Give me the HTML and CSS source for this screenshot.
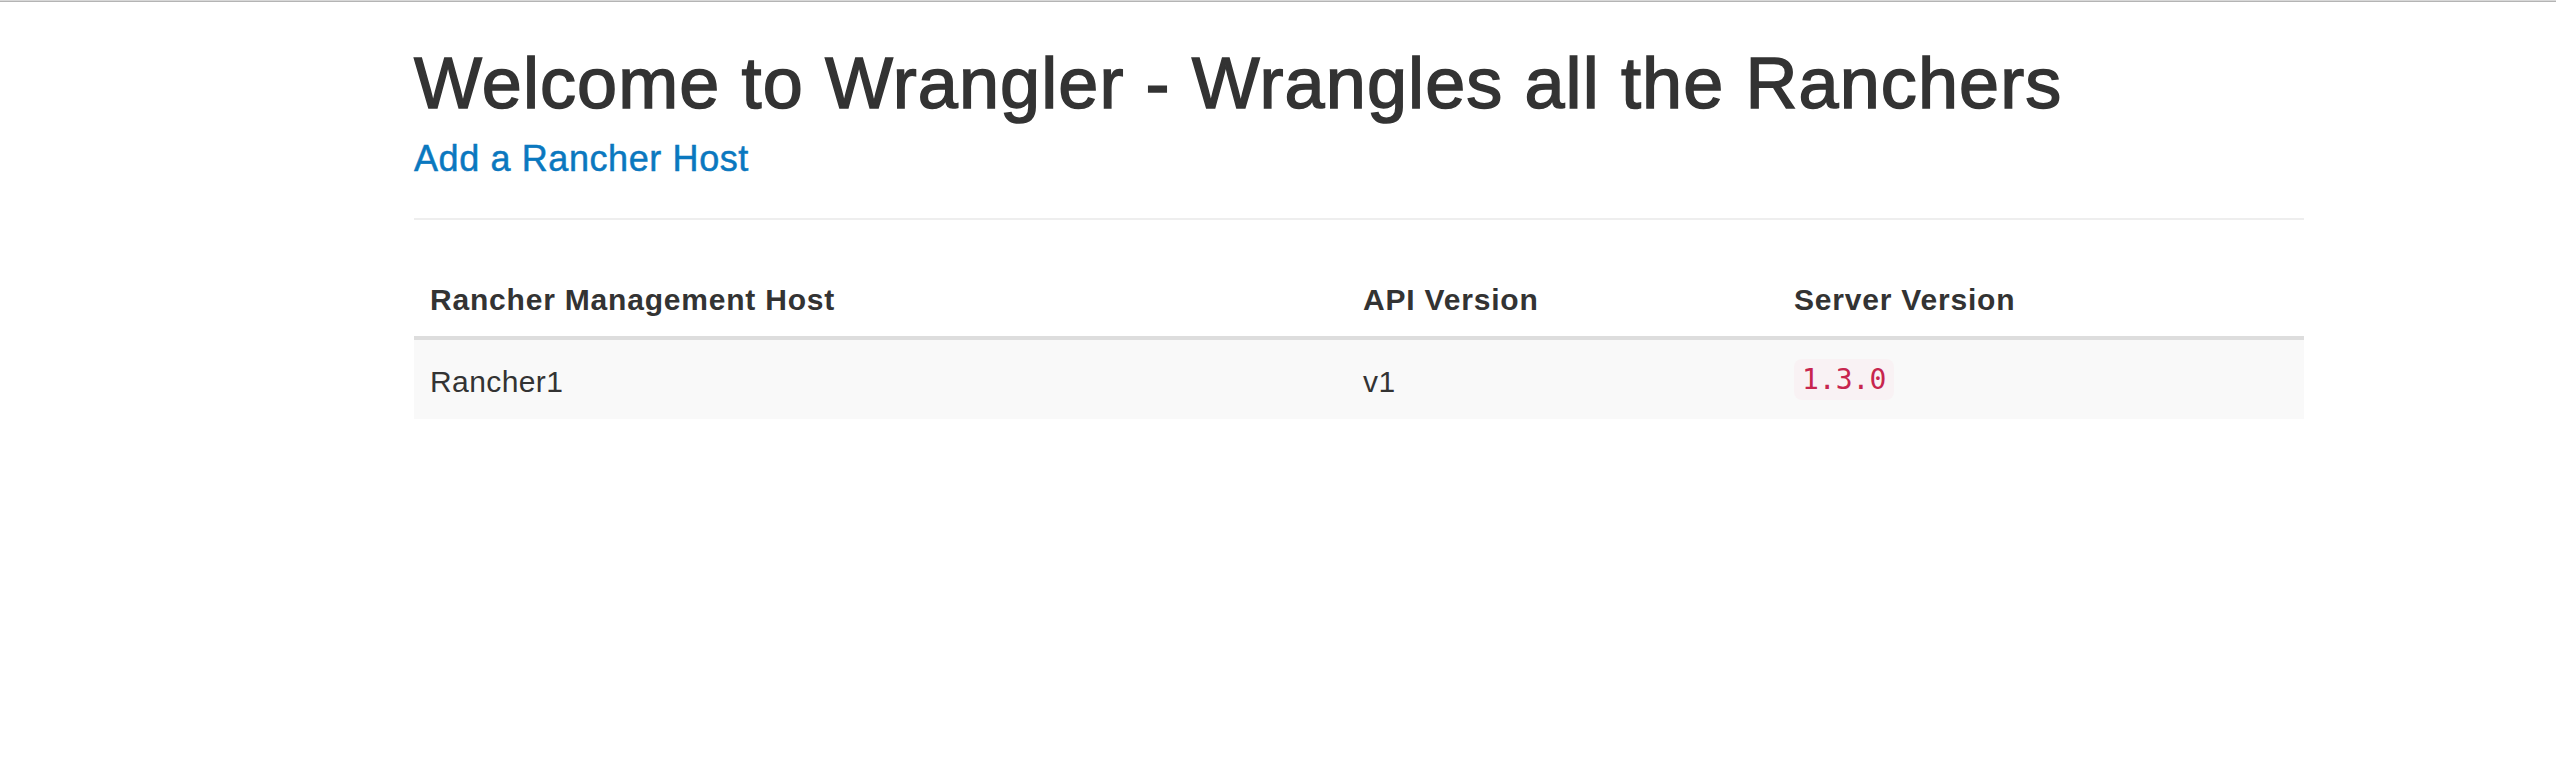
FILE: index.html
```html
<!DOCTYPE html>
<html lang="en">
<head>
<meta charset="utf-8">
<title>Wrangler</title>
<link rel="stylesheet" href="styles.css">
</head>
<body>
<div class="topline"></div>
<div class="page">
  <div class="container">
    <h1 class="title">Welcome to Wrangler - Wrangles all the Ranchers</h1>
    <h4 class="subtitle"><a class="link" href="#">Add a Rancher Host</a></h4>
    <hr class="divider">
    <table class="hosts">
      <colgroup>
        <col class="col-host">
        <col class="col-api">
        <col class="col-server">
      </colgroup>
      <thead>
        <tr>
          <th>Rancher Management Host</th>
          <th>API Version</th>
          <th>Server Version</th>
        </tr>
      </thead>
      <tbody>
        <tr class="row-striped">
          <td>Rancher1</td>
          <td>v1</td>
          <td><code class="version">1.3.0</code></td>
        </tr>
      </tbody>
    </table>
  </div>
</div>
</body>
</html>
```
FILE: styles.css
```css
html, body {
  margin: 0;
  padding: 0;
  background: #ffffff;
}

body {
  font-family: "Liberation Sans", Arial, Helvetica, sans-serif;
  color: #333333;
  font-size: 30px;
  line-height: 40px;
}

.topline {
  height: 1px;
  border-bottom: 1px solid #b4b4b4;
  background: #d8d8d8;
}

.page {
  padding-left: 414px;
}

.container {
  width: 1890px;
}

.title {
  margin: 42px 0 0 0;
  font-size: 72px;
  line-height: 79px;
  font-weight: 400;
  color: #333333;
  letter-spacing: 1.1px;
  -webkit-text-stroke: 1.5px #333333;
}

.subtitle {
  margin: 16px 0 0 0;
  font-size: 36px;
  line-height: 40px;
  font-weight: 400;
}

.link {
  color: #0a78bf;
  text-decoration: none;
  letter-spacing: 0.6px;
  -webkit-text-stroke: 0.5px #0a78bf;
}

.divider {
  margin: 39px 0 0 0;
  border: 0;
  height: 2px;
  background: #eeeeee;
}

.hosts {
  margin-top: 44px;
  width: 1890px;
  table-layout: fixed;
  border-collapse: separate;
  border-spacing: 0;
}

.col-host { width: 933px; }
.col-api { width: 431px; }
.col-server { width: 526px; }

.hosts th {
  text-align: left;
  font-weight: 700;
  letter-spacing: 0.8px;
  padding: 16px 16px;
  border-bottom: 4px solid #dddddd;
}

.hosts td {
  padding: 20px 16px 16px 16px;
  letter-spacing: 0.4px;
}

.row-striped td {
  background: #f9f9f9;
}

.version {
  font-family: "DejaVu Sans Mono", "Liberation Mono", monospace;
  font-size: 28px;
  letter-spacing: 0;
  color: #c7254e;
  background: #f9f2f4;
  padding: 4px 8px;
  border-radius: 8px;
  vertical-align: 4px;
}
```
